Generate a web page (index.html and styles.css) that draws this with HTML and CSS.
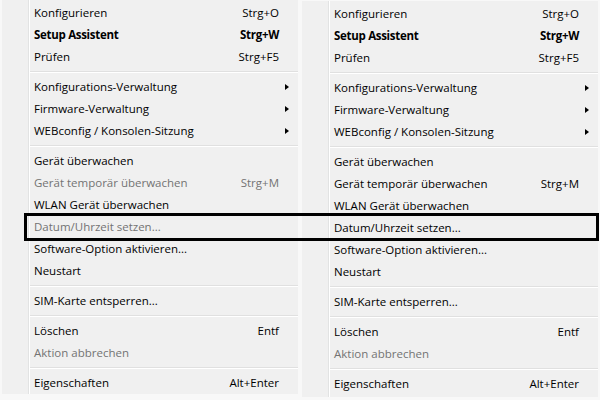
FILE: index.html
```html
<!DOCTYPE html>
<html lang="de">
<head>
<meta charset="utf-8">
<title>Kontextmenü</title>
<link rel="stylesheet" href="styles.css">
</head>
<body>
<div class="menus">
  <div class="menu">
    <div class="item"><span class="label">Konfigurieren</span><span class="key">Strg+O</span><span class="sub"></span></div>
    <div class="item bold"><span class="label">Setup Assistent</span><span class="key">Strg+W</span><span class="sub"></span></div>
    <div class="item"><span class="label">Prüfen</span><span class="key">Strg+F5</span><span class="sub"></span></div>
    <div class="sep"></div>
    <div class="item"><span class="label">Konfigurations-Verwaltung</span><span class="key"></span><span class="sub"><i class="arrow"></i></span></div>
    <div class="item"><span class="label">Firmware-Verwaltung</span><span class="key"></span><span class="sub"><i class="arrow"></i></span></div>
    <div class="item"><span class="label">WEBconfig / Konsolen-Sitzung</span><span class="key"></span><span class="sub"><i class="arrow"></i></span></div>
    <div class="sep"></div>
    <div class="item"><span class="label">Gerät überwachen</span><span class="key"></span><span class="sub"></span></div>
    <div class="item disabled"><span class="label">Gerät temporär überwachen</span><span class="key">Strg+M</span><span class="sub"></span></div>
    <div class="item"><span class="label">WLAN Gerät überwachen</span><span class="key"></span><span class="sub"></span></div>
    <div class="item disabled"><span class="label">Datum/Uhrzeit setzen...</span><span class="key"></span><span class="sub"></span></div>
    <div class="item"><span class="label">Software-Option aktivieren...</span><span class="key"></span><span class="sub"></span></div>
    <div class="item"><span class="label">Neustart</span><span class="key"></span><span class="sub"></span></div>
    <div class="sep"></div>
    <div class="item"><span class="label">SIM-Karte entsperren...</span><span class="key"></span><span class="sub"></span></div>
    <div class="sep"></div>
    <div class="item"><span class="label">Löschen</span><span class="key">Entf</span><span class="sub"></span></div>
    <div class="item disabled"><span class="label">Aktion abbrechen</span><span class="key"></span><span class="sub"></span></div>
    <div class="sep"></div>
    <div class="item"><span class="label">Eigenschaften</span><span class="key">Alt+Enter</span><span class="sub"></span></div>
  </div>
  <div class="menu menu-second">
    <div class="item"><span class="label">Konfigurieren</span><span class="key">Strg+O</span><span class="sub"></span></div>
    <div class="item bold"><span class="label">Setup Assistent</span><span class="key">Strg+W</span><span class="sub"></span></div>
    <div class="item"><span class="label">Prüfen</span><span class="key">Strg+F5</span><span class="sub"></span></div>
    <div class="sep"></div>
    <div class="item"><span class="label">Konfigurations-Verwaltung</span><span class="key"></span><span class="sub"><i class="arrow"></i></span></div>
    <div class="item"><span class="label">Firmware-Verwaltung</span><span class="key"></span><span class="sub"><i class="arrow"></i></span></div>
    <div class="item"><span class="label">WEBconfig / Konsolen-Sitzung</span><span class="key"></span><span class="sub"><i class="arrow"></i></span></div>
    <div class="sep"></div>
    <div class="item"><span class="label">Gerät überwachen</span><span class="key"></span><span class="sub"></span></div>
    <div class="item"><span class="label">Gerät temporär überwachen</span><span class="key">Strg+M</span><span class="sub"></span></div>
    <div class="item"><span class="label">WLAN Gerät überwachen</span><span class="key"></span><span class="sub"></span></div>
    <div class="item"><span class="label">Datum/Uhrzeit setzen...</span><span class="key"></span><span class="sub"></span></div>
    <div class="item"><span class="label">Software-Option aktivieren...</span><span class="key"></span><span class="sub"></span></div>
    <div class="item"><span class="label">Neustart</span><span class="key"></span><span class="sub"></span></div>
    <div class="sep"></div>
    <div class="item"><span class="label">SIM-Karte entsperren...</span><span class="key"></span><span class="sub"></span></div>
    <div class="sep"></div>
    <div class="item"><span class="label">Löschen</span><span class="key">Entf</span><span class="sub"></span></div>
    <div class="item disabled"><span class="label">Aktion abbrechen</span><span class="key"></span><span class="sub"></span></div>
    <div class="sep"></div>
    <div class="item"><span class="label">Eigenschaften</span><span class="key">Alt+Enter</span><span class="sub"></span></div>
  </div>
  <div class="highlight"></div>
</div>
</body>
</html>
```

FILE: styles.css
```css
* { box-sizing: border-box; }
html, body { margin: 0; padding: 0; }
body {
  background: #f8f8f8;
  width: 600px;
  height: 400px;
  overflow: hidden;
  font-family: "Open Sans", "Noto Sans", sans-serif;
  font-size: 11.5px;
  color: #000;
}
.menus {
  position: relative;
  display: flex;
  align-items: flex-start;
  padding-left: 2px;
}
.menu {
  width: 296px;
  background: #f0f0f0;
  padding: 2px 0 0 0;
  background-image: linear-gradient(to right, transparent 26px, #e2e3e3 26px, #e2e3e3 27px, #ffffff 27px, #ffffff 28px, transparent 28px);
}
.menu-second {
  margin-left: 4px;
  margin-top: 1px;
  padding-bottom: 2px;
}
.item {
  height: 22px;
  display: flex;
  align-items: center;
  padding-left: 32px;
  padding-bottom: 1px;
  white-space: nowrap;
}
.label { flex: 1; }
.key { text-align: right; }
.sub {
  width: 19px;
  display: flex;
  align-items: center;
  padding-left: 6px;
}
.arrow {
  display: block;
  width: 0;
  height: 0;
  border-left: 4px solid #000;
  border-top: 3.5px solid transparent;
  border-bottom: 3.5px solid transparent;
}
.bold { font-weight: 700; letter-spacing: -0.3px; }
.disabled { color: #737373; }
.sep {
  height: 8px;
  margin-left: 28px;
  background: linear-gradient(to bottom, transparent 3px, #e0e0e0 3px, #e0e0e0 4px, #ffffff 4px, #ffffff 5px, transparent 5px);
}
.highlight {
  position: absolute;
  left: 24px;
  top: 213px;
  width: 575px;
  height: 28px;
  border: 3px solid #000;
}
```
